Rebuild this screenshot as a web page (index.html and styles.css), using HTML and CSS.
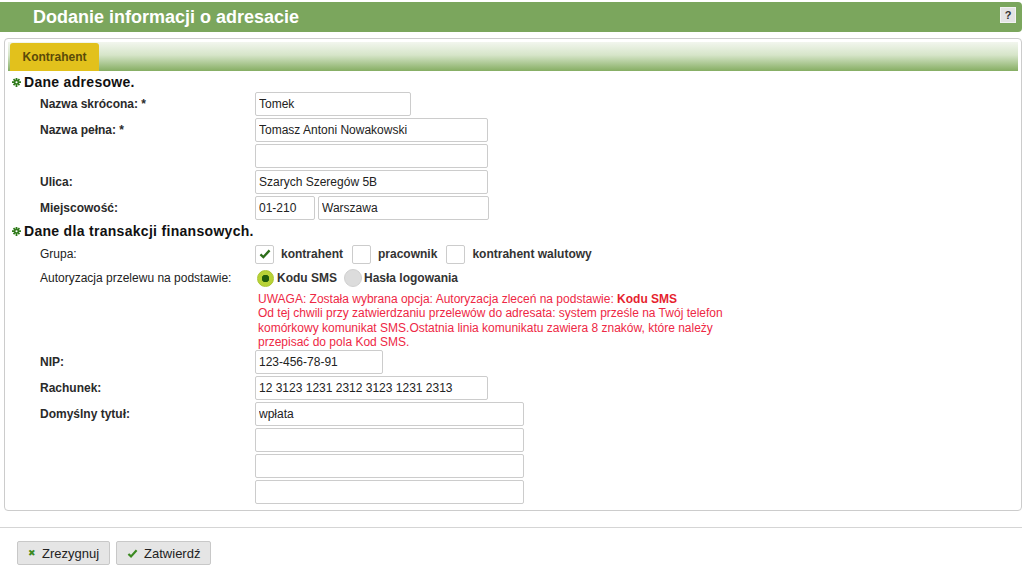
FILE: index.html
```html
<!DOCTYPE html>
<html lang="pl">
<head>
    <meta charset="UTF-8">
    <title>Dodanie informacji o adresacie</title>
    <link rel="stylesheet" href="styles.css">
</head>
<body>

    <div class="header">
        <h1>Dodanie informacji o adresacie</h1>
        <span class="help">?</span>
    </div>

    <div class="panel">
        <div class="tabbar">
            <span class="tab">Kontrahent</span>
        </div>

        <h3 class="section">
            <svg class="gear" width="9" height="9" viewBox="0 0 10 10"><path d="M4 0h2v2.2l1.6-1.6 1.4 1.4L7.4 3.6 10 3.6v2H7.4L9 7.2 7.6 8.6 6 7V10H4V7L2.4 8.6 1 7.2 2.6 5.6H0v-2h2.6L1 2 2.4.6 4 2.2z" fill="#2f7a1a"/><circle cx="5" cy="4.7" r="1.2" fill="#fff"/></svg>
            Dane adresowe.
        </h3>

        <div class="row">
            <label class="lbl bold">Nazwa skrócona: *</label>
            <input type="text" class="w155" value="Tomek">
        </div>
        <div class="row">
            <label class="lbl bold">Nazwa pełna: *</label>
            <div class="stack">
                <input type="text" class="w232" value="Tomasz Antoni Nowakowski">
                <input type="text" class="w232" value="">
            </div>
        </div>
        <div class="row">
            <label class="lbl bold">Ulica:</label>
            <input type="text" class="w232" value="Szarych Szeregów 5B">
        </div>
        <div class="row">
            <label class="lbl bold">Miejscowość:</label>
            <div class="pair">
                <input type="text" class="w59" value="01-210">
                <input type="text" class="w170" value="Warszawa">
            </div>
        </div>

        <h3 class="section">
            <svg class="gear" width="9" height="9" viewBox="0 0 10 10"><path d="M4 0h2v2.2l1.6-1.6 1.4 1.4L7.4 3.6 10 3.6v2H7.4L9 7.2 7.6 8.6 6 7V10H4V7L2.4 8.6 1 7.2 2.6 5.6H0v-2h2.6L1 2 2.4.6 4 2.2z" fill="#2f7a1a"/><circle cx="5" cy="4.7" r="1.2" fill="#fff"/></svg>
            Dane dla transakcji finansowych.
        </h3>

        <div class="row group">
            <label class="lbl">Grupa:</label>
            <div class="choices">
                <span class="check on"><svg width="12" height="10" viewBox="0 0 13 11"><path d="M1.5 6l3.2 3L11.5 1.5" fill="none" stroke="#2d6e1a" stroke-width="2.6"/></svg></span>
                <span class="opt">kontrahent</span>
                <span class="check"></span>
                <span class="opt">pracownik</span>
                <span class="check"></span>
                <span class="opt">kontrahent walutowy</span>
            </div>
        </div>
        <div class="row">
            <label class="lbl">Autoryzacja przelewu na podstawie:</label>
            <div class="choices">
                <span class="radio on"></span>
                <span class="ropt">Kodu SMS</span>
                <span class="radio"></span>
                <span class="ropt">Hasła logowania</span>
            </div>
        </div>
        <p class="warning">UWAGA: Została wybrana opcja: Autoryzacja zleceń na podstawie: <b>Kodu SMS</b><br>
            Od tej chwili przy zatwierdzaniu przelewów do adresata: system prześle na Twój telefon<br>
            komórkowy komunikat SMS.Ostatnia linia komunikatu zawiera 8 znaków, które należy<br>
            przepisać do pola Kod SMS.</p>

        <div class="row">
            <label class="lbl bold">NIP:</label>
            <input type="text" class="w127" value="123-456-78-91">
        </div>
        <div class="row">
            <label class="lbl bold">Rachunek:</label>
            <input type="text" class="w232" value="12 3123 1231 2312 3123 1231 2313">
        </div>
        <div class="row">
            <label class="lbl bold">Domyślny tytuł:</label>
            <div class="stack">
                <input type="text" class="w268" value="wpłata">
                <input type="text" class="w268" value="">
                <input type="text" class="w268" value="">
                <input type="text" class="w268" value="">
            </div>
        </div>
    </div>

    <div class="footer">
        <button type="button" class="btn"><span class="x">&#10006;</span> Zrezygnuj</button>
        <button type="button" class="btn"><svg width="11" height="9" viewBox="0 0 13 11"><path d="M1.5 6l3.2 3L11.5 1.5" fill="none" stroke="#3c8a22" stroke-width="2.6"/></svg> Zatwierdź</button>
    </div>

</body>
</html>
```

FILE: styles.css
```css
* {
    box-sizing: border-box;
    margin: 0;
    padding: 0;
}

body {
    font-family: 'Liberation Sans', Arial, sans-serif;
    font-size: 12px;
    color: #222;
    background: #fff;
    width: 1024px;
}

.header {
    margin: 2px 2px 0 0;
    height: 30px;
    background: #7ba65d;
    border-radius: 0 4px 4px 0;
    display: flex;
    align-items: center;
    justify-content: space-between;
    padding: 0 6px 0 33px;
}

.header h1 {
    color: #fff;
    font-size: 18px;
    font-weight: bold;
}

.help {
    width: 16px;
    height: 16px;
    margin-top: -4px;
    background: #e4e4e4;
    border: 1px solid #f2f2f2;
    color: #333;
    font-size: 11px;
    font-weight: bold;
    text-align: center;
    line-height: 15px;
}

.panel {
    margin: 6px 2px 0 4px;
    border: 1px solid #ccc;
    border-radius: 4px;
    padding: 3px 3px 4px 3px;
}

.tabbar {
    height: 29px;
    background: linear-gradient(to bottom, #f2f6ee 0%, #d6e5c9 45%, #86ae63 100%);
    display: flex;
    align-items: flex-end;
    padding-left: 2px;
}

.tab {
    height: 28px;
    width: 89px;
    background: #e2c11c;
    border-radius: 3px 3px 0 0;
    color: #5a4a08;
    font-weight: bold;
    text-align: center;
    line-height: 28px;
}

.section {
    font-size: 14px;
    font-weight: bold;
    color: #111;
    height: 16px;
    line-height: 16px;
    margin: 3px 0 2px 4px;
    display: flex;
    align-items: center;
    gap: 3px;
    letter-spacing: 0.3px;
}

.gear {
    display: block;
}

.row {
    display: flex;
    align-items: flex-start;
    margin-bottom: 2px;
}

.row.group {
    margin-top: 3px;
    margin-bottom: 0;
}

.lbl {
    width: 247px;
    padding-left: 32px;
    line-height: 24px;
    color: #222;
}

.lbl.bold {
    font-weight: bold;
    color: #2a2a2a;
}

.stack {
    display: flex;
    flex-direction: column;
    gap: 2px;
}

.pair {
    display: flex;
    gap: 3px;
}

input[type="text"] {
    height: 24px;
    border: 1px solid #ccc;
    border-radius: 2px;
    padding: 0 3px;
    font-family: 'Liberation Sans', Arial, sans-serif;
    font-size: 12px;
    color: #222;
    background: #fff;
}

.w155 { width: 156px; }
.w232 { width: 233px; }
.w59 { width: 60px; }
.w170 { width: 171px; }
.w127 { width: 128px; }
.w268 { width: 269px; }

.choices {
    display: flex;
    align-items: center;
    height: 24px;
}

.check {
    width: 19px;
    height: 19px;
    border: 1px solid #ccc;
    border-radius: 2px;
    background: #fff;
    display: flex;
    align-items: center;
    justify-content: center;
    margin-right: 7px;
}

.opt {
    font-weight: bold;
    color: #333;
    margin-right: 9px;
}

.radio {
    width: 18px;
    height: 18px;
    border-radius: 50%;
    background: #dcdcdc;
    border: 1px solid #d0d0d0;
    margin-right: 2px;
}

.radio.on {
    width: 17px;
    height: 17px;
    margin-left: 2px;
    background: radial-gradient(circle, #215c0c 0 3.5px, #b8d236 4px);
    border: 1px solid #a9c52e;
    margin-right: 3px;
}

.ropt {
    font-weight: bold;
    color: #333;
    margin-right: 7px;
}

.warning {
    margin: 0 0 1px 250px;
    color: #ee2845;
    line-height: 14.3px;
}

.warning b {
    color: #e61f2f;
}

.footer {
    margin: 16px 2px 0 0;
    border-top: 1px solid #d5d5d5;
    padding: 13px 0 0 17px;
    display: flex;
    gap: 6px;
}

.btn {
    height: 24px;
    padding: 0 10px;
    background: #e5e5e5;
    border: 1px solid #c8c8c8;
    border-radius: 2px;
    font-family: 'Liberation Sans', Arial, sans-serif;
    font-size: 13px;
    color: #222;
    display: flex;
    align-items: center;
    gap: 6px;
}

.btn .x {
    color: #3c8a22;
    font-size: 9px;
}
```
